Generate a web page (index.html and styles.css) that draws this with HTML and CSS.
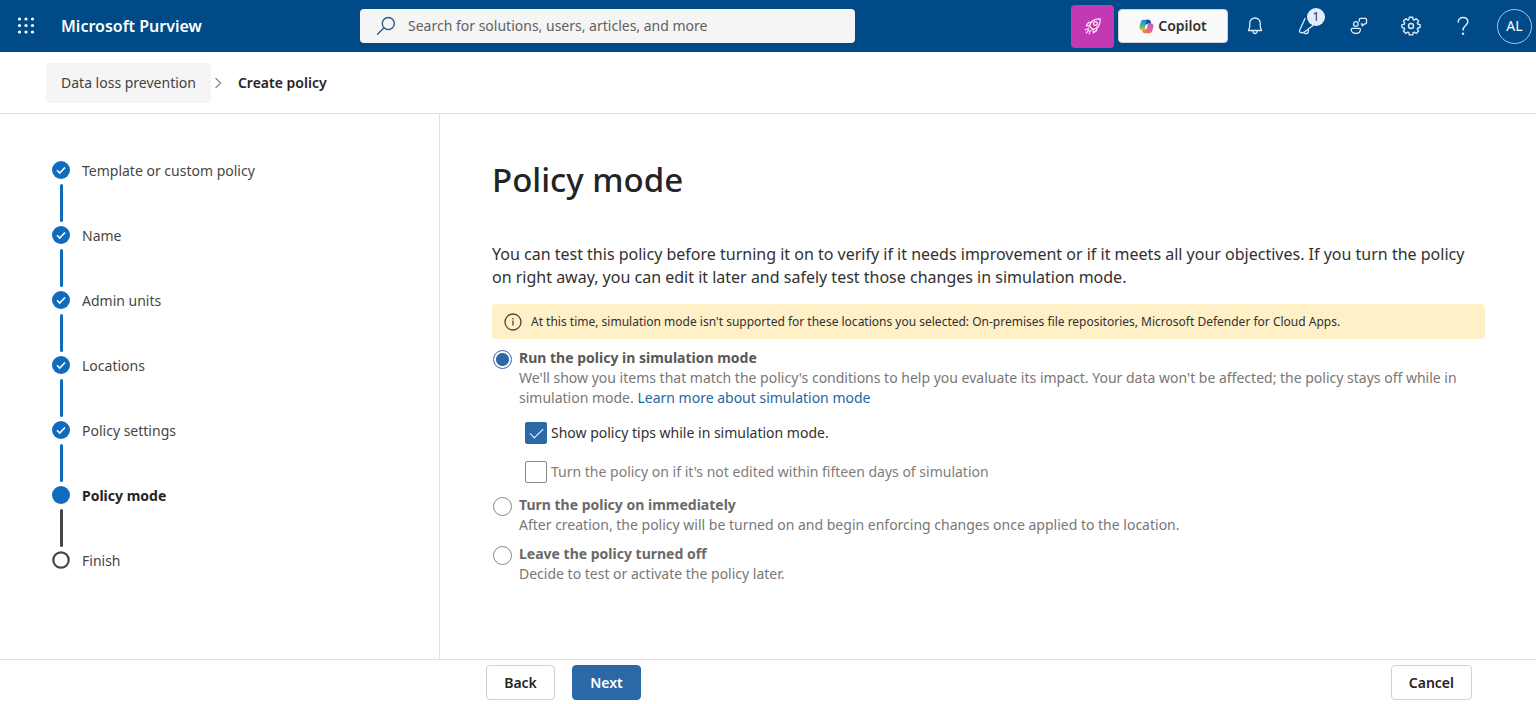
FILE: index.html
```html
<!DOCTYPE html>
<html lang="en">
<head>
<meta charset="utf-8">
<meta name="viewport" content="width=device-width, initial-scale=1">
<title>Create policy - Microsoft Purview</title>
<link rel="stylesheet" href="styles.css">
</head>
<body>
<div class="page">
  <header class="topbar">
    <button class="icon-btn waffle" type="button" aria-label="App launcher">
      <svg width="20" height="20" viewBox="0 0 20 20" fill="#fff"><circle cx="3.5" cy="3" r="1.6"/><circle cx="10" cy="3" r="1.6"/><circle cx="16.5" cy="3" r="1.6"/><circle cx="3.5" cy="9.5" r="1.6"/><circle cx="10" cy="9.5" r="1.6"/><circle cx="16.5" cy="9.5" r="1.6"/><circle cx="3.5" cy="16" r="1.6"/><circle cx="10" cy="16" r="1.6"/><circle cx="16.5" cy="16" r="1.6"/></svg>
    </button>
    <a class="brand" href="#">Microsoft Purview</a>
    <div class="search">
      <svg width="20" height="20" viewBox="0 0 20 20" fill="none" stroke="#2a5a8c" stroke-width="1.4" stroke-linecap="round"><circle cx="12.3" cy="7.5" r="6"/><path d="M8 11.8 1.5 18.3"/></svg>
      <input class="search-input" type="search" aria-label="Search" placeholder="Search for solutions, users, articles, and more">
    </div>
    <nav class="tools" aria-label="Tools">
      <button class="rocket" type="button" aria-label="What's new">
        <svg width="18" height="18" viewBox="0 0 18 18" fill="none" stroke="#fbe3f8" stroke-width="1.3" stroke-linecap="round" stroke-linejoin="round"><path d="M5.500 9.200C6.300 4.800 10 1.600 16.200 1.800 16.500 8 13.200 11.700 8.800 12.500Z"/><circle cx="11.500" cy="6.500" r="1.900"/><path d="M7 5.300H4.600L2.200 8.600l3.300.6M12.700 11v2.400L9.400 15.800l-.6-3.300M4.600 11.200l-1.200 1.200M6.800 13.400l-1.200 1.200M4.900 13.100l-2.600 2.600M2 12.200l-.6.600M5.800 16l-.6.600"/></svg>
      </button>
      <button class="copilot" type="button">
        <svg width="15" height="15" viewBox="0 0 15 15">
          <defs>
            <linearGradient id="cool" x1=".3" y1="0" x2=".3" y2="1"><stop offset="0" stop-color="#1b8fe0"/><stop offset=".5" stop-color="#35b3a0"/><stop offset=".8" stop-color="#8cc63f"/><stop offset="1" stop-color="#f0c21a"/></linearGradient>
            <linearGradient id="warm" x1="1" y1="0" x2=".2" y2="1"><stop offset="0" stop-color="#8f6be8"/><stop offset=".5" stop-color="#ee5f9e"/><stop offset="1" stop-color="#f5803c"/></linearGradient>
          </defs>
          <path d="M4.800.8h4.400c1.300 0 1.900.5 2.300 1.700l.7 2H9.600c-1.100 0-1.700.5-2 1.500L6.300 9.800c-.3 1-.8 1.500-1.800 1.500H3.200C1.200 11.300.2 9.900.6 7.600L1.700 3.300C2.200 1.600 3.200.8 4.800.8Z" fill="url(#cool)"/>
          <path d="M7.600.8h1.600c1.300 0 1.900.5 2.300 1.700l.7 2H9.600c-1.100 0-1.700.5-2 1.500L6.500 4.500Z" fill="#1c4fae"/>
          <path d="M10.200 14.200H5.800c-1.300 0-1.900-.5-2.300-1.700l-.4-1.200h1.600c1.100 0 1.700-.5 2-1.500L8 6c.3-1 .8-1.500 1.800-1.500h2c2 0 3 1.200 2.600 3.300l-1.100 4c-.5 1.700-1.500 2.400-3.100 2.400Z" fill="url(#warm)"/>
          <path d="M6.900 5.500h1.900L7.700 9.800H5.800Z" fill="#fff"/>
        </svg>
        Copilot
      </button>
      <button class="icon-btn" type="button" aria-label="Notifications">
        <svg width="20" height="20" viewBox="0 0 20 20" fill="none" stroke="#dceafa" stroke-width="1.3" stroke-linejoin="round" stroke-linecap="round"><path d="M10 2a5.300 5.300 0 0 0-5.300 5.300V11L3.500 14.500h13L15.300 11V7.300A5.300 5.300 0 0 0 10 2Z"/><path d="M7.800 15c.2 1.800 1 2.500 2.200 2.500s2-.7 2.200-2.500"/></svg>
      </button>
      <button class="icon-btn" type="button" aria-label="Announcements, 1 new">
        <svg width="20" height="20" viewBox="0 0 20 20" fill="none" stroke="#dceafa" stroke-width="1.3" stroke-linejoin="round" stroke-linecap="round"><path d="M8 2.500 2.700 14.300c-.5 1.100 0 1.900 1 2.200l1.600.4c.6.100 1 0 1.500-.4L16 9.500"/><path d="M7 16.200c.6 1.400 1.800 1.800 3 1.200s1.600-1.800 1.200-3.600"/></svg>
        <span class="badge">1</span>
      </button>
      <button class="icon-btn" type="button" aria-label="Feedback">
        <svg width="20" height="20" viewBox="0 0 20 20" fill="none" stroke="#dceafa" stroke-width="1.3" stroke-linejoin="round" stroke-linecap="round"><circle cx="6.800" cy="8" r="2.300"/><path d="M3.200 12.300h7.200c.6 0 1 .4 1 1 0 2.600-1.800 4.200-4.600 4.200s-4.600-1.600-4.600-4.200c0-.6.400-1 1-1Z"/><path d="M10.300 5.200V3.500c0-.6.500-1.100 1.100-1.100h5c.6 0 1.100.5 1.100 1.100v3.300c0 .6-.5 1.100-1.100 1.100h-.9l-2.300 2V7.900h-.9"/></svg>
      </button>
      <button class="icon-btn" type="button" aria-label="Settings">
        <svg width="20" height="20" viewBox="0 0 20 20" fill="none" stroke="#dceafa" stroke-width="1.4" stroke-linejoin="round"><path d="M8.300 1.200h3.400l.4 2.300 1.200.5 1.900-1.300 2.400 2.400-1.300 1.900.5 1.200 2.300.4v3l-2.300.4-.5 1.200 1.300 1.900-2.400 2.400-1.900-1.300-1.200.5-.4 2.200H8.300l-.4-2.200-1.200-.5-1.900 1.300-2.400-2.400 1.300-1.900-.5-1.200-2.200-.4v-3l2.200-.4.5-1.200-1.300-1.900 2.400-2.400 1.900 1.300 1.200-.5Z"/><circle cx="10" cy="10" r="2.500"/></svg>
      </button>
      <button class="icon-btn" type="button" aria-label="Help">
        <svg width="20" height="20" viewBox="0 0 20 20" fill="none" stroke="#dceafa" stroke-width="1.5" stroke-linecap="round"><path d="M5.200 5.900C5.200 3.200 7.200 1.500 10 1.500s4.800 1.700 4.800 4.200c0 3.600-4.800 4-4.800 8.300"/><circle cx="10" cy="17.800" r=".5" fill="#dceafa"/></svg>
      </button>
      <button class="avatar" type="button" aria-label="Account">AL</button>
    </nav>
  </header>

  <nav class="crumbs" aria-label="Breadcrumb">
    <a class="crumb" href="#">Data loss prevention</a>
    <svg width="8" height="12" viewBox="0 0 8 12" fill="none" stroke="#8a8886" stroke-width="1.2"><path d="M1.500 1 6.500 6l-5 5"/></svg>
    <span class="crumb-current">Create policy</span>
  </nav>

  <div class="body">
    <aside class="sidebar">
      <ol class="steps">
        <li class="step done"><span class="marker"><svg width="18" height="18" viewBox="0 0 18 18" fill="none"><circle cx="9" cy="9" r="9" fill="#0f6cbd"/><path d="m5 9.300 2.700 2.700L13 6.500" stroke="#fff" stroke-width="1.6"/></svg></span>Template or custom policy</li>
        <li class="step done"><span class="marker"><svg width="18" height="18" viewBox="0 0 18 18" fill="none"><circle cx="9" cy="9" r="9" fill="#0f6cbd"/><path d="m5 9.300 2.700 2.700L13 6.500" stroke="#fff" stroke-width="1.6"/></svg></span>Name</li>
        <li class="step done"><span class="marker"><svg width="18" height="18" viewBox="0 0 18 18" fill="none"><circle cx="9" cy="9" r="9" fill="#0f6cbd"/><path d="m5 9.300 2.700 2.700L13 6.500" stroke="#fff" stroke-width="1.6"/></svg></span>Admin units</li>
        <li class="step done"><span class="marker"><svg width="18" height="18" viewBox="0 0 18 18" fill="none"><circle cx="9" cy="9" r="9" fill="#0f6cbd"/><path d="m5 9.300 2.700 2.700L13 6.500" stroke="#fff" stroke-width="1.6"/></svg></span>Locations</li>
        <li class="step done"><span class="marker"><svg width="18" height="18" viewBox="0 0 18 18" fill="none"><circle cx="9" cy="9" r="9" fill="#0f6cbd"/><path d="m5 9.300 2.700 2.700L13 6.500" stroke="#fff" stroke-width="1.6"/></svg></span>Policy settings</li>
        <li class="step current" aria-current="step"><span class="marker"><svg width="18" height="18" viewBox="0 0 18 18"><circle cx="9" cy="9" r="9" fill="#0f6cbd"/></svg></span>Policy mode</li>
        <li class="step"><span class="marker"><svg width="18" height="18" viewBox="0 0 18 18"><circle cx="9" cy="9" r="7.700" fill="#fff" stroke="#484644" stroke-width="2.2"/></svg></span>Finish</li>
      </ol>
    </aside>

    <main class="main">
      <h1 class="title">Policy mode</h1>
      <p class="intro">You can test this policy before turning it on to verify if it needs improvement or if it meets all your objectives. If you turn the policy on right away, you can edit it later and safely test those changes in simulation mode.</p>
      <div class="notice" role="status">
        <svg width="18" height="18" viewBox="0 0 18 18" fill="none" stroke="#4a453c" stroke-width="1.3"><circle cx="9" cy="9" r="8"/><path d="M9 7.600v5M9 5v1.400"/></svg>
        At this time, simulation mode isn't supported for these locations you selected: On-premises file repositories, Microsoft Defender for Cloud Apps.
      </div>
      <form class="options">
        <div class="option">
          <input class="radio" type="radio" name="mode" id="mode-sim" checked>
          <div class="option-text">
            <label class="option-label strong" for="mode-sim">Run the policy in simulation mode</label>
            <p class="option-desc">We'll show you items that match the policy's conditions to help you evaluate its impact. Your data won't be affected; the policy stays off while in simulation mode. <a class="link" href="#">Learn more about simulation mode</a></p>
            <div class="checks">
              <label class="check"><input class="checkbox" type="checkbox" checked>Show policy tips while in simulation mode.</label>
              <label class="check muted"><input class="checkbox" type="checkbox">Turn the policy on if it's not edited within fifteen days of simulation</label>
            </div>
          </div>
        </div>
        <div class="option">
          <input class="radio" type="radio" name="mode" id="mode-on">
          <div class="option-text">
            <label class="option-label" for="mode-on">Turn the policy on immediately</label>
            <p class="option-desc">After creation, the policy will be turned on and begin enforcing changes once applied to the location.</p>
          </div>
        </div>
        <div class="option">
          <input class="radio" type="radio" name="mode" id="mode-off">
          <div class="option-text">
            <label class="option-label" for="mode-off">Leave the policy turned off</label>
            <p class="option-desc">Decide to test or activate the policy later.</p>
          </div>
        </div>
      </form>
    </main>
  </div>

  <footer class="footer">
    <button class="btn" type="button">Back</button>
    <button class="btn primary" type="button">Next</button>
    <button class="btn cancel" type="button">Cancel</button>
  </footer>
</div>
</body>
</html>
```
FILE: styles.css
```css
* { box-sizing: border-box; }
body {
  margin: 0;
  background: #fff;
  color: #323130;
  font-family: "Noto Sans", "Open Sans", sans-serif;
  font-size: 14px;
  line-height: 20px;
}
button, input { font: inherit; }
button { cursor: pointer; }
svg { display: block; flex: none; }
h1, p, ol { margin: 0; padding: 0; }

.page { display: flex; flex-direction: column; min-height: 100vh; }

.topbar {
  display: flex;
  align-items: center;
  height: 52px;
  padding: 0 4px 0 8px;
  background: #004b87;
}
.icon-btn {
  position: relative;
  display: grid;
  place-items: center;
  width: 36px;
  height: 36px;
  padding: 0;
  border: 0;
  background: none;
}
.brand {
  width: 299px;
  margin-left: 17px;
  color: #fff;
  font-size: 16px;
  font-weight: 600;
  text-decoration: none;
}
.search {
  display: flex;
  flex: 0 1 495px;
  align-items: center;
  gap: 12px;
  height: 34px;
  padding: 0 16px;
  border-radius: 4px;
  background: #f5f5f5;
}
.search-input {
  flex: 1;
  min-width: 0;
  padding: 0;
  border: 0;
  outline: 0;
  background: none;
  color: #323130;
}
.search-input::placeholder { color: #616161; opacity: 1; }
.tools { display: flex; align-items: center; gap: 16px; margin-left: auto; }
.rocket {
  display: grid;
  place-items: center;
  width: 43px;
  height: 43px;
  margin-right: -12px;
  padding: 0;
  border: 0;
  border-radius: 4px;
  background: #c239b3;
}
.copilot {
  display: flex;
  align-items: center;
  justify-content: center;
  gap: 4px;
  width: 110px;
  height: 34px;
  margin-right: -7px;
  padding: 0;
  border: 1px solid #d1d1d1;
  border-radius: 4px;
  background: #fafafa;
  color: #323130;
  font-weight: 600;
}
.badge {
  position: absolute;
  top: 0;
  right: 0;
  width: 18px;
  height: 18px;
  border-radius: 50%;
  background: #e3edf9;
  color: #323130;
  font-size: 12px;
  line-height: 18px;
  text-align: center;
}
.avatar {
  width: 35px;
  height: 35px;
  padding: 0;
  border: 1px solid #a9c6e2;
  border-radius: 50%;
  background: none;
  color: #fff;
}

.crumbs {
  display: flex;
  align-items: center;
  height: 62px;
  padding-left: 46px;
  border-bottom: 1px solid #e1e1e1;
}
.crumb {
  margin-right: 3px;
  padding: 10px 15px;
  border-radius: 4px;
  background: #f5f5f5;
  color: #424242;
  text-decoration: none;
}
.crumb-current { margin-left: 16px; color: #242424; font-weight: 600; }

.body { display: flex; flex: 1; }
.sidebar {
  flex: none;
  width: 440px;
  padding: 47px 52px 24px;
  border-right: 1px solid #e1e1e1;
}
.steps { list-style: none; }
.step {
  display: flex;
  gap: 12px;
  height: 65px;
  color: #484644;
}
.step.current { color: #242424; font-weight: 700; }
.marker { display: flex; flex-direction: column; align-items: center; gap: 5px; }
.step:not(:last-child) .marker::after {
  content: "";
  width: 3px;
  height: 38px;
  border-radius: 2px;
  background: #0f6cbd;
}
.step.current .marker::after { background: #484644; }

.main { flex: 1; padding: 42px 51px 24px 52px; }
.title { color: #242424; font-size: 33px; font-weight: 500; line-height: 48px; }
.intro { margin-top: 39px; font-size: 16px; line-height: 23px; }
.notice {
  display: flex;
  align-items: center;
  gap: 9px;
  min-height: 35px;
  margin-top: 15px;
  padding: 0 12px;
  border-radius: 4px;
  background: #fff0c8;
  font-size: 12px;
}
.options { display: flex; flex-direction: column; gap: 9px; margin-top: 9px; }
.option { display: flex; gap: 7px; }
.radio, .checkbox { flex: none; margin: 0; appearance: none; background: #fff; }
.radio {
  width: 19px;
  height: 19px;
  margin: 2px 0 0 1px;
  border: 1px solid #8a8886;
  border-radius: 50%;
}
.radio:checked { border-color: #2b68a5; background: radial-gradient(circle, #2b68a5 6px, #fff 7px); }
.option-label { display: block; color: #6b6967; font-weight: 700; }
.option-label.strong { color: #5a5856; }
.option-desc { color: #797775; }
.link { color: #2566a3; text-decoration: none; }
.checks { display: flex; flex-direction: column; gap: 17px; padding: 14px 0 3px 6px; }
.check { display: flex; align-items: center; gap: 4px; }
.check.muted { color: #7f7d7b; }
.checkbox { display: grid; place-items: center; width: 22px; height: 22px; border: 1px solid #8a8886; border-radius: 2px; }
.checkbox:checked { border-color: #2b68a5; background: #2b68a5; }
.checkbox:checked::before {
  content: "";
  width: 12px;
  height: 6px;
  border: solid #fff;
  border-width: 0 0 1px 1px;
  transform: translateY(-2px) rotate(-45deg);
}

.footer {
  display: flex;
  gap: 17px;
  padding: 5px 64px 4px 486px;
  border-top: 1px solid #e1e1e1;
}
.btn {
  min-width: 69px;
  height: 35px;
  padding: 0 17px;
  border: 1px solid #d1d1d1;
  border-radius: 4px;
  background: #fff;
  color: #242424;
  font-weight: 600;
}
.btn.primary { border-color: #2b68a5; background: #2b68a5; color: #fff; }
.btn.cancel { margin-left: auto; }
```
